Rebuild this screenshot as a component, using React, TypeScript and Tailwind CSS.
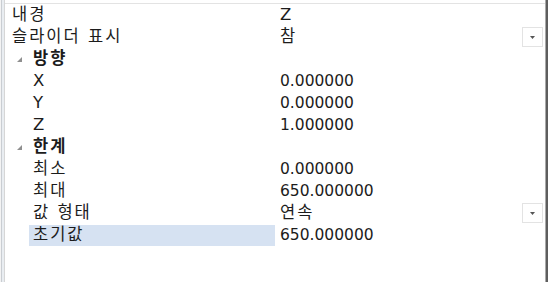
type Row =
  | { kind: "cat"; name: string }
  | {
      kind: "prop";
      name: string;
      value: string;
      indent: 0 | 1;
      dropdown?: boolean;
      selected?: boolean;
    };

const rows: Row[] = [
  { kind: "prop", name: "내경", value: "Z", indent: 0 },
  { kind: "prop", name: "슬라이더 표시", value: "참", indent: 0, dropdown: true },
  { kind: "cat", name: "방향" },
  { kind: "prop", name: "X", value: "0.000000", indent: 1 },
  { kind: "prop", name: "Y", value: "0.000000", indent: 1 },
  { kind: "prop", name: "Z", value: "1.000000", indent: 1 },
  { kind: "cat", name: "한계" },
  { kind: "prop", name: "최소", value: "0.000000", indent: 1 },
  { kind: "prop", name: "최대", value: "650.000000", indent: 1 },
  { kind: "prop", name: "값 형태", value: "연속", indent: 1, dropdown: true },
  { kind: "prop", name: "초기값", value: "650.000000", indent: 1, selected: true },
];

function Expander() {
  return (
    <svg width="5" height="5" viewBox="0 0 5 5" className="shrink-0">
      <polygon points="5,0 5,5 0,5" fill="#8f8f8f" />
    </svg>
  );
}

function DropButton() {
  return (
    <div className="mr-[2px] mt-px h-[20px] w-[21px] border border-[#e3e3e3] bg-white flex items-center justify-center">
      <svg width="5" height="3" viewBox="0 0 5 3">
        <polygon points="0,0 5,0 2.5,3" fill="#555" />
      </svg>
    </div>
  );
}

export default function App() {
  return (
    <div className="w-[548px] h-[282px] bg-white flex text-[16.5px] text-[#1c1c1c] font-['DejaVu_Sans','Noto_Sans_CJK_KR',sans-serif] overflow-hidden">
      {/* LEFT EDGE */}
      <div className="flex h-full shrink-0">
        <div className="w-px bg-[#f3f3f3]" />
        <div className="w-px bg-[#c9cdd2]" />
        <div className="w-[2px] bg-[#e9edf1]" />
        <div className="w-px bg-[#d6d6d6]" />
      </div>

      {/* GRID */}
      <div className="flex-1 flex flex-col pt-[3px]">
        <div className="border-t border-[#e3e3e3] flex flex-col">
          {rows.map((row, i) =>
            row.kind === "cat" ? (
              <div key={i} className="h-[22px] flex items-center pl-[12px]">
                <Expander />
                <span className="ml-[11px] font-bold tracking-[2px] leading-[22px]">
                  {row.name}
                </span>
              </div>
            ) : (
              <div key={i} className="h-[22px] flex">
                {row.indent === 0 ? (
                  <div className="w-[270px] shrink-0 pl-[7px] leading-[22px] tracking-[2px] whitespace-nowrap">
                    {row.name}
                  </div>
                ) : (
                  <div className="w-[270px] shrink-0 pl-[24px]">
                    <div
                      className={
                        row.selected
                          ? "mt-px h-[21px] pl-[4px] leading-[20px] tracking-[2px] whitespace-nowrap bg-[#d6e2f2]"
                          : "h-[22px] pl-[4px] leading-[22px] tracking-[2px] whitespace-nowrap"
                      }
                    >
                      {row.name}
                    </div>
                  </div>
                )}
                <div className="flex-1 flex justify-between pl-[5px]">
                  <span
                    className={
                      /^[0-9.]+$/.test(row.value)
                        ? "text-[15.5px] leading-[22px] whitespace-nowrap"
                        : "leading-[22px] tracking-[2px] whitespace-nowrap"
                    }
                  >
                    {row.value}
                  </span>
                  {row.dropdown && <DropButton />}
                </div>
              </div>
            ),
          )}
        </div>
      </div>

      {/* RIGHT EDGE */}
      <div className="flex h-full shrink-0">
        <div className="w-px bg-[#a9a9a9]" />
        <div className="w-[2px] bg-[#5e5e5e]" />
      </div>
    </div>
  );
}
